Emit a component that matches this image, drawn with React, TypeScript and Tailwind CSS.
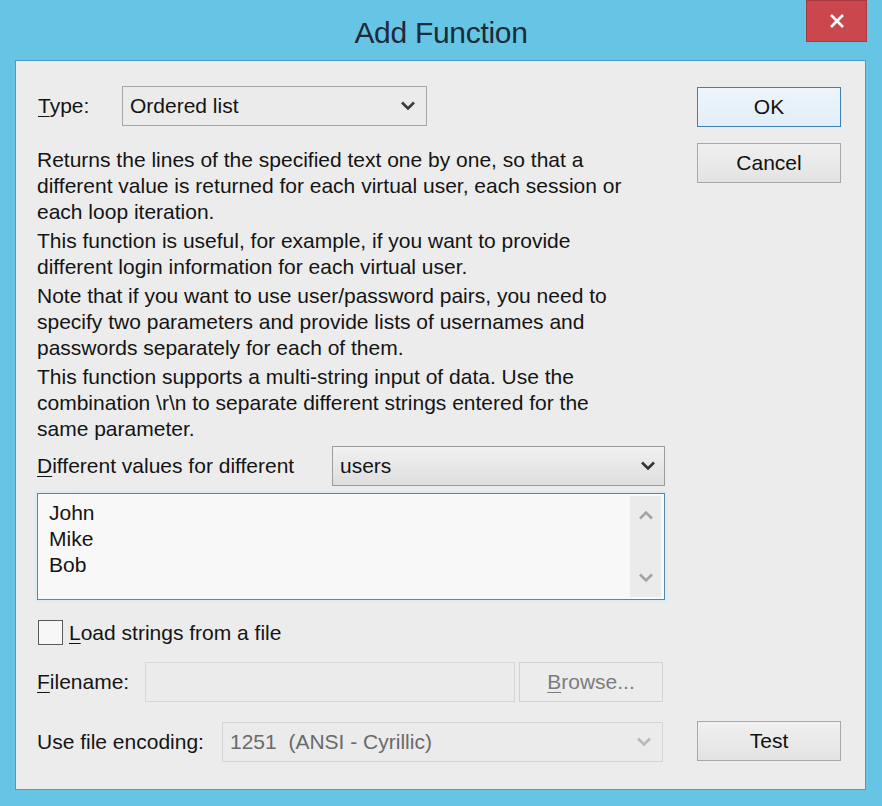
import React from 'react';

const font = { fontFamily: '"Liberation Sans", Arial, sans-serif' };

// chevron used by the drop-down boxes and the scroll bar
const Chevron = ({ up = false, className = '' }: { up?: boolean; className?: string }) => (
  <svg width="16" height="10" viewBox="0 0 16 10" className={className}>
    <polyline
      points={up ? '2,8.5 8,2.5 14,8.5' : '2,1.5 8,7.5 14,1.5'}
      fill="none"
      stroke="currentColor"
      strokeWidth="2.6"
    />
  </svg>
);

const Key = ({ children }: { children: React.ReactNode }) => (
  <span className="underline underline-offset-[3px] decoration-1">{children}</span>
);

const Button = ({
  children,
  primary = false,
  disabled = false,
  className = '',
}: {
  children: React.ReactNode;
  primary?: boolean;
  disabled?: boolean;
  className?: string;
}) => (
  <button
    type="button"
    className={[
      'flex items-center justify-center w-[144px] h-[40px] border text-[21px]',
      primary
        ? 'border-[#3d81b3] bg-gradient-to-b from-[#eef5fb] to-[#e2eef8] text-[#111]'
        : disabled
          ? 'border-[#d2d2d2] bg-[#ececec] text-[#7c7c7c]'
          : 'border-[#a9a9a9] bg-gradient-to-b from-[#f0f0f0] to-[#e3e3e3] text-[#111]',
      className,
    ].join(' ')}
  >
    {children}
  </button>
);

const paragraphs = [
  [
    'Returns the lines of the specified text one by one, so that a',
    'different value is returned for each virtual user, each session or',
    'each loop iteration.',
  ],
  [
    'This function is useful, for example, if you want to provide',
    'different login information for each virtual user.',
  ],
  [
    'Note that if you want to use user/password pairs, you need to',
    'specify two parameters and provide lists of usernames and',
    'passwords separately for each of them.',
  ],
  [
    'This function supports a multi-string input of data. Use the',
    'combination \\r\\n to separate different strings entered for the',
    'same parameter.',
  ],
];

export default function App() {
  return (
    <div className="w-[882px] h-[806px] bg-[#66c4e5] flex flex-col" style={font}>
      {/* title bar */}
      <div className="h-[60px] flex items-center justify-center relative shrink-0">
        <span className="text-[30px] text-[#1d2a38] tracking-[-0.3px] mt-[4px]">Add Function</span>
        <div className="absolute right-[15px] top-0 w-[61px] h-[42px] bg-[#c9474d] border border-[#a63a40] flex items-center justify-center">
          <svg width="16" height="16" viewBox="0 0 16 16">
            <path d="M2 2 L14 14 M14 2 L2 14" stroke="#fff" strokeWidth="2.6" />
          </svg>
        </div>
      </div>

      {/* client area */}
      <div className="flex-1 ml-[15px] mr-[16px] mb-[16px] border border-[#4a9cc4] bg-[#ececec] flex pl-[21px] pr-[24px] pt-[25px] pb-[26px] gap-[32px] text-[21px] text-[#141414]">
        {/* left column */}
        <div className="w-[628px] flex flex-col">
          <div className="flex items-center h-[40px]">
            <span className="w-[85px] pl-[1px]">
              <Key>T</Key>ype:
            </span>
            <div className="w-[305px] h-[40px] border border-[#a6a6a6] bg-[#ebebeb] flex items-center justify-between pl-[7px] pr-[10px]">
              <span>Ordered list</span>
              <Chevron className="text-[#3a3a3a]" />
            </div>
          </div>

          <div className="mt-[21px] leading-[26px] flex flex-col gap-[3px] whitespace-nowrap">
            {paragraphs.map((lines, i) => (
              <p key={i}>
                {lines.map((l, j) => (
                  <span key={j} className="block">
                    {l}
                  </span>
                ))}
              </p>
            ))}
          </div>

          <div className="mt-[4px] flex items-center h-[40px]">
            <span className="w-[295px] whitespace-nowrap">
              <Key>D</Key>ifferent values for different
            </span>
            <div className="w-[333px] h-[40px] border border-[#9c9c9c] bg-gradient-to-b from-[#f1f1f1] to-[#dedede] flex items-center justify-between pl-[7px] pr-[8px]">
              <span>users</span>
              <Chevron className="text-[#333]" />
            </div>
          </div>

          <div className="mt-[7px] h-[107px] border border-[#5b87a6] shadow-[0_0_0_2px_#dcecf6] bg-[#f8f8f8] flex">
            <div className="flex-1 pl-[11px] pt-[6px] leading-[26px]">
              <div>John</div>
              <div>Mike</div>
              <div>Bob</div>
            </div>
            <div className="w-[31px] my-[2px] mr-[3px] bg-[#ebebeb] flex flex-col items-center justify-between py-[14px] text-[#a4a4a4]">
              <Chevron up />
              <Chevron />
            </div>
          </div>

          <div className="mt-[20px] flex items-center h-[25px]">
            <div className="w-[25px] h-[25px] border border-[#5a5a5a] bg-[#f7f7f7] ml-[1px]" />
            <span className="ml-[6px]">
              <Key>L</Key>oad strings from a file
            </span>
          </div>

          <div className="mt-[17px] flex items-center h-[40px]">
            <span className="w-[108px]">
              <Key>F</Key>ilename:
            </span>
            <div className="w-[370px] h-[40px] border border-[#d7d7d7] bg-[#ebebeb]" />
            <Button disabled className="ml-[4px]">
              <span>
                <Key>B</Key>rowse...
              </span>
            </Button>
          </div>

          <div className="mt-[20px] flex items-center h-[40px]">
            <span className="w-[185px]">Use file encoding:</span>
            <div className="w-[441px] h-[40px] border border-[#d4d4d4] bg-[#ebebeb] flex items-center justify-between pl-[7px] pr-[10px] text-[#6a6a6a]">
              <span className="whitespace-pre">1251  (ANSI - Cyrillic)</span>
              <Chevron className="text-[#b9b9b9]" />
            </div>
          </div>
        </div>

        {/* right column */}
        <div className="flex flex-col justify-between pt-[1px] pb-[2px]">
          <div className="flex flex-col gap-[16px]">
            <Button primary>OK</Button>
            <Button>Cancel</Button>
          </div>
          <Button>Test</Button>
        </div>
      </div>
    </div>
  );
}
